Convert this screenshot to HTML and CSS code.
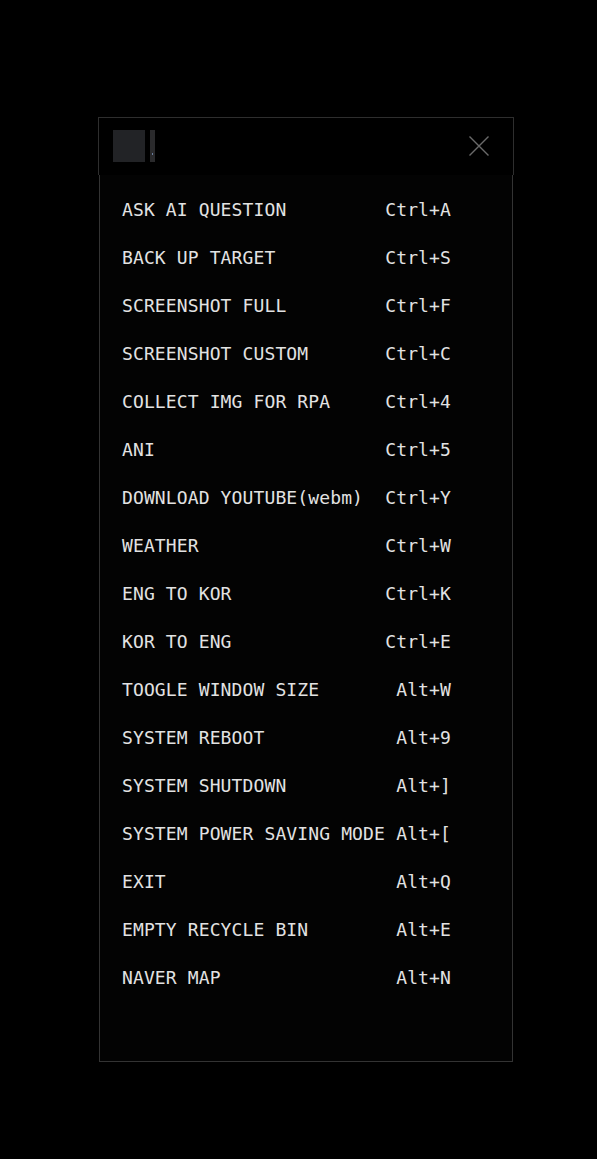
FILE: index.html
```html
<!DOCTYPE html>
<html>
<head>
<meta charset="utf-8">
<link rel="stylesheet" href="styles.css">
</head>
<body>
<div class="panel">
  <div class="titlebar">
    <div class="app-icon"></div>
    <div class="app-bar"><span class="dot"></span></div>
    <div class="spacer"></div>
    <svg class="close" width="20" height="20" viewBox="0 0 20 20"><path d="M0.5 0.5 L19.5 19.5 M19.5 0.5 L0.5 19.5" stroke="#6a6a6a" stroke-width="1.4" fill="none"/></svg>
  </div>
  <div class="content">
    <ul class="list">
      <li class="row"><span class="label">ASK AI QUESTION</span><span class="key">Ctrl+A</span></li>
      <li class="row"><span class="label">BACK UP TARGET</span><span class="key">Ctrl+S</span></li>
      <li class="row"><span class="label">SCREENSHOT FULL</span><span class="key">Ctrl+F</span></li>
      <li class="row"><span class="label">SCREENSHOT CUSTOM</span><span class="key">Ctrl+C</span></li>
      <li class="row"><span class="label">COLLECT IMG FOR RPA</span><span class="key">Ctrl+4</span></li>
      <li class="row"><span class="label">ANI</span><span class="key">Ctrl+5</span></li>
      <li class="row"><span class="label">DOWNLOAD YOUTUBE(webm)</span><span class="key">Ctrl+Y</span></li>
      <li class="row"><span class="label">WEATHER</span><span class="key">Ctrl+W</span></li>
      <li class="row"><span class="label">ENG TO KOR</span><span class="key">Ctrl+K</span></li>
      <li class="row"><span class="label">KOR TO ENG</span><span class="key">Ctrl+E</span></li>
      <li class="row"><span class="label">TOOGLE WINDOW SIZE</span><span class="key">Alt+W</span></li>
      <li class="row"><span class="label">SYSTEM REBOOT</span><span class="key">Alt+9</span></li>
      <li class="row"><span class="label">SYSTEM SHUTDOWN</span><span class="key">Alt+]</span></li>
      <li class="row"><span class="label">SYSTEM POWER SAVING MODE</span><span class="key">Alt+[</span></li>
      <li class="row"><span class="label">EXIT</span><span class="key">Alt+Q</span></li>
      <li class="row"><span class="label">EMPTY RECYCLE BIN</span><span class="key">Alt+E</span></li>
      <li class="row"><span class="label">NAVER MAP</span><span class="key">Alt+N</span></li>
    </ul>
  </div>
</div>
</body>
</html>
```
FILE: styles.css
```css
html, body {
  margin: 0;
  padding: 0;
  background: #000;
}
body {
  padding: 117px 0 0 98px;
}
.panel {
  width: 416px;
  display: flex;
  flex-direction: column;
}
.titlebar {
  box-sizing: border-box;
  height: 58px;
  border: 1px solid #2e2e2e;
  border-bottom: none;
  background: #000;
  display: flex;
  align-items: flex-start;
  padding: 12px 24px 0 14px;
}
.app-icon {
  width: 32px;
  height: 32px;
  background: #222326;
}
.app-bar {
  width: 5px;
  height: 32px;
  margin-left: 5px;
  background: #2a2a2c;
  position: relative;
}
.dot {
  position: absolute;
  left: 2px;
  top: 23px;
  width: 1px;
  height: 2px;
  background: #6a7ea0;
}
.spacer {
  flex: 1;
}
.close {
  margin-top: 6px;
  display: block;
}
.content {
  box-sizing: border-box;
  height: 887px;
  margin: 0 1px;
  border: 1px solid #333;
  border-top: none;
  background: #030303;
  padding: 11px 0 0 22px;
}
.list {
  list-style: none;
  margin: 0;
  padding: 0;
  width: 329px;
}
.row {
  display: flex;
  justify-content: space-between;
  height: 48px;
  line-height: 48px;
  font-family: "DejaVu Sans Mono", monospace;
  font-size: 18px;
  letter-spacing: 0.12px;
  color: #e2e2e2;
  white-space: pre;
}
```
